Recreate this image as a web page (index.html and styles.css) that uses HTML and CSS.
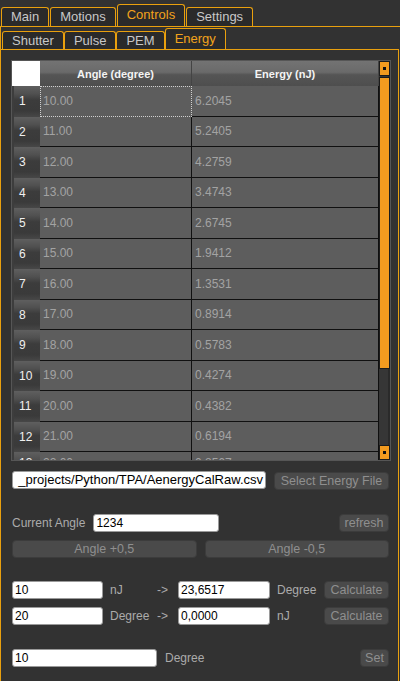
FILE: index.html
```html
<!DOCTYPE html>
<html>
<head>
<meta charset="utf-8">
<link rel="stylesheet" href="styles.css">
</head>
<body>
<div class="app">
  <div class="tabbar outer">
    <div class="tab">Main</div>
    <div class="tab">Motions</div>
    <div class="tab active">Controls</div>
    <div class="tab">Settings</div>
  </div>
  <div class="outer-pane">
    <div class="tabbar inner">
      <div class="tab">Shutter</div>
      <div class="tab">Pulse</div>
      <div class="tab">PEM</div>
      <div class="tab active">Energy</div>
    </div>
    <div class="inner-pane">
      <div class="table-frame">
        <div class="grid">
          <div class="corner"></div>
          <div class="hcell">Angle (degree)</div>
          <div class="hcell">Energy (nJ)</div>

          <div class="rh">1</div><div class="cell focus">10.00</div><div class="cell">6.2045</div>
          <div class="rh">2</div><div class="cell">11.00</div><div class="cell">5.2405</div>
          <div class="rh">3</div><div class="cell">12.00</div><div class="cell">4.2759</div>
          <div class="rh">4</div><div class="cell">13.00</div><div class="cell">3.4743</div>
          <div class="rh">5</div><div class="cell">14.00</div><div class="cell">2.6745</div>
          <div class="rh">6</div><div class="cell">15.00</div><div class="cell">1.9412</div>
          <div class="rh">7</div><div class="cell">16.00</div><div class="cell">1.3531</div>
          <div class="rh">8</div><div class="cell">17.00</div><div class="cell">0.8914</div>
          <div class="rh">9</div><div class="cell">18.00</div><div class="cell">0.5783</div>
          <div class="rh">10</div><div class="cell">19.00</div><div class="cell">0.4274</div>
          <div class="rh">11</div><div class="cell">20.00</div><div class="cell">0.4382</div>
          <div class="rh">12</div><div class="cell">21.00</div><div class="cell">0.6194</div>
          <div class="rh last">13</div><div class="cell last">22.00</div><div class="cell last">0.8567</div>
        </div>
        <div class="scrollbar">
          <div class="sb-btn"><span class="sb-dot"></span></div>
          <div class="sb-track"><div class="sb-handle"></div></div>
          <div class="sb-btn"><span class="sb-dot"></span></div>
        </div>
      </div>

      <div class="form">
        <div class="path-row">
          <div class="field path"><span>_projects/Python/TPA/AenergyCalRaw.csv</span></div>
          <div class="btn grow">Select Energy File</div>
        </div>

        <div class="angle-row">
          <span class="label">Current Angle</span>
          <div class="field current">1234</div>
          <div class="spacer"></div>
          <div class="btn refresh">refresh</div>
        </div>

        <div class="step-row">
          <div class="btn">Angle +0,5</div>
          <div class="btn">Angle -0,5</div>
        </div>

        <div class="calc-grid">
          <div class="field">10</div>
          <span class="label">nJ</span>
          <span class="label">-&gt;</span>
          <div class="field">23,6517</div>
          <span class="label">Degree</span>
          <div class="btn">Calculate</div>

          <div class="field">20</div>
          <span class="label">Degree</span>
          <span class="label">-&gt;</span>
          <div class="field">0,0000</div>
          <span class="label">nJ</span>
          <div class="btn">Calculate</div>
        </div>

        <div class="set-row">
          <div class="field set-field">10</div>
          <span class="label">Degree</span>
          <div class="spacer"></div>
          <div class="btn set">Set</div>
        </div>
      </div>
    </div>
  </div>
</div>
</body>
</html>
```

FILE: styles.css
```css
html, body {
  margin: 0;
  padding: 0;
}
body {
  width: 400px;
  height: 681px;
  overflow: hidden;
  background: #323232;
  font-family: "Liberation Sans", Arial, sans-serif;
  font-size: 12px;
  color: #b0b0b0;
}
.app {
  display: flex;
  flex-direction: column;
  height: 681px;
}

/* tabs */
.tabbar {
  display: flex;
  align-items: flex-end;
}
.tabbar.outer {
  height: 26px;
  padding-left: 1px;
  gap: 1px;
}
.tabbar.inner {
  height: 22px;
  padding-left: 1px;
}
.tab {
  box-sizing: border-box;
  height: 19px;
  padding: 0 9px;
  border: 1px solid #e9a00e;
  border-bottom: none;
  border-radius: 3px 3px 0 0;
  background: #2a2a2a;
  color: #c8c8c8;
  font-size: 13px;
  line-height: 17px;
  white-space: nowrap;
}
.tab.active {
  height: 22px;
  line-height: 20px;
  color: #f2a31c;
}
.tabbar.inner .tab {
  height: 18px;
  line-height: 17px;
}
.tabbar.inner .tab.active {
  height: 21px;
  line-height: 19px;
}

.outer-pane {
  flex: 1;
  border-top: 1px solid #e9a00e;
  border-left: 1px solid #e9a00e;
  display: flex;
  flex-direction: column;
}
.inner-pane {
  flex: 1;
  width: 398px;
  box-sizing: border-box;
  border-top: 1px solid #e9a00e;
  border-right: 1px solid #e9a00e;
  padding: 10px 0 0 10px;
}

/* table */
.table-frame {
  box-sizing: border-box;
  width: 380px;
  height: 401px;
  border: 1px solid #565656;
  display: flex;
  background: #2c2c2c;
}
.grid {
  width: 367px;
  height: 399px;
  overflow: hidden;
  display: grid;
  grid-template-columns: 28px 152px 187px;
  grid-template-rows: 25px;
  grid-auto-rows: 30.5px;
  align-content: start;
}
.corner {
  background: #ffffff;
}
.hcell {
  box-sizing: border-box;
  background: linear-gradient(#737373 0%, #6a6a6a 45%, #555555 55%, #4e4e4e 100%);
  border-right: 1px solid #444;
  color: #f4f4f4;
  display: flex;
  align-items: center;
  justify-content: center;
  font-size: 11px;
  font-weight: bold;
}
.rh {
  box-sizing: border-box;
  background: linear-gradient(#5f5f5f 0%, #505050 25%, #3c3c3c 45%, #3a3a3a 80%, #474747 100%);
  color: #f0f0f0;
  display: flex;
  align-items: center;
  padding-left: 5px;
  font-size: 12px;
  border-left: 2px solid #3d3d3d;
}
.cell {
  box-sizing: border-box;
  background: #5d5d5d;
  border-right: 1px solid #101010;
  border-bottom: 1px solid #101010;
  color: #a3a3a3;
  display: flex;
  align-items: center;
  padding-left: 3px;
  font-size: 12px;
}
.rh.last, .cell.last {
  align-items: flex-start;
  padding-top: 4px;
}
.cell.focus {
  border: 1px dotted #d0d0d0;
  padding-left: 2px;
}

.scrollbar {
  width: 11px;
  display: flex;
  flex-direction: column;
  background: #2e2e2e;
}
.sb-btn {
  box-sizing: border-box;
  height: 15px;
  background: #f39b1f;
  border: 1px solid #1c1c1c;
  display: flex;
  align-items: center;
  justify-content: center;
}
.sb-dot {
  width: 3px;
  height: 3px;
  background: #111;
}
.sb-track {
  flex: 1;
  padding: 1px 0;
  background: #363636;
  border-right: 2px solid #2a2a2a;
  box-sizing: border-box;
}
.sb-handle {
  height: 292px;
  background: #f39b1f;
  border: 1px solid #1c1c1c;
  box-sizing: border-box;
  margin-right: -2px;
}

/* form */
.form {
  width: 377px;
  padding-left: 1px;
  display: flex;
  flex-direction: column;
}
.field {
  box-sizing: border-box;
  height: 18px;
  background: #ffffff;
  border: 1px solid #9a9a9a;
  border-radius: 3px;
  color: #000;
  font-size: 12px;
  line-height: 16px;
  padding-left: 2px;
  white-space: nowrap;
  overflow: hidden;
}
.btn {
  box-sizing: border-box;
  height: 18px;
  background: #4a4a4a;
  border: 1px solid #3c3c3c;
  border-radius: 4px;
  color: #8f8f8f;
  font-size: 12.5px;
  line-height: 16px;
  text-align: center;
  white-space: nowrap;
}
.label {
  color: #ababab;
  font-size: 12px;
  white-space: nowrap;
}
.spacer {
  flex: 1;
}

.path-row {
  margin-top: 10px;
  display: flex;
  gap: 8px;
}
.field.path {
  width: 254px;
  display: flex;
  justify-content: flex-end;
  font-size: 13px;
  padding-right: 2px;
}
.btn.grow {
  flex: 1;
  margin-top: 1px;
}

.angle-row {
  margin-top: 24px;
  display: flex;
  align-items: center;
  gap: 8px;
}
.field.current {
  width: 126px;
}
.btn.refresh {
  width: 50px;
}

.step-row {
  margin-top: 8px;
  display: grid;
  grid-template-columns: 1fr 1fr;
  gap: 8px;
}

.calc-grid {
  margin-top: 23px;
  display: grid;
  grid-template-columns: 91px 40px 14px 92px 40px 65px;
  column-gap: 7px;
  row-gap: 8px;
  align-items: center;
}

.set-row {
  margin-top: 24px;
  display: flex;
  align-items: center;
  gap: 8px;
}
.field.set-field {
  width: 145px;
}
.btn.set {
  width: 29px;
}
```
